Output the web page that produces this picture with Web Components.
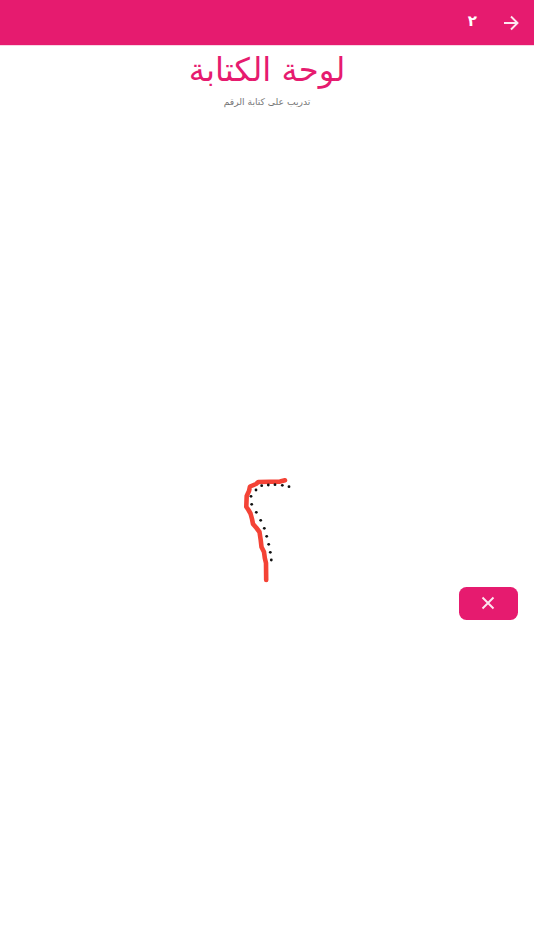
<!DOCTYPE html>
<html lang="ar">
  <head>
    <meta charset="UTF-8" />
    <title>لوحة الكتابة</title>
    <style>
      body {
        margin: 0;
        background: #fff;
        font-family: "DejaVu Sans", sans-serif;
      }
    </style>
  </head>
  <body>
    <app-bar number="٢"></app-bar>
    <page-title sub="تدريب على كتابة الرقم">لوحة الكتابة</page-title>
    <writing-board></writing-board>

    <script type="module">
      class AppBar extends HTMLElement {
        constructor() {
          super();
          this.attachShadow({ mode: "open" });
          this.shadowRoot.innerHTML = `
            <style>
              :host { display: flex; justify-content: flex-end; align-items: center; height: 45px; background: #e61b6f; border-bottom: 1px solid #f9d5e3; color: #fff; }
              span { font-size: 15px; font-weight: 700; margin-right: 22px; padding-bottom: 4px; }
              svg { width: 24px; height: 24px; margin-right: 11px; }
            </style>
            <span>${this.getAttribute("number")}</span>
            <svg viewBox="0 0 24 24" fill="none" stroke="#fde7f0" stroke-width="1.9"><path d="M5 12h13.5M12 5.5l6.5 6.5-6.5 6.5" /></svg>`;
        }
      }

      class PageTitle extends HTMLElement {
        constructor() {
          super();
          this.attachShadow({ mode: "open" });
          this.shadowRoot.innerHTML = `
            <style>
              :host { display: flex; flex-direction: column; align-items: center; height: 74px; }
              h1 { margin: 2px 0 0; font-size: 32.3px; font-weight: 400; line-height: 44px; color: #e61b6f; }
              p { margin: 1px 0 0; font-size: 9.2px; line-height: 18px; color: #757575; }
            </style>
            <h1><slot></slot></h1>
            <p>${this.getAttribute("sub")}</p>`;
        }
      }

      class WritingBoard extends HTMLElement {
        constructor() {
          super();
          this.attachShadow({ mode: "open" });
          const dots = [[289,486.7],[282.3,485.3],[275,484.7],[268.3,485],[261.7,485.7],[256,490],[251,496.3],[251.7,504.3],[256.3,512.3],[260.7,520.3],[264.3,528.3],[266.7,536.3],[268.7,544.3],[270.3,552.3],[271.3,560]];
          const line = "285,480.3 280,481.6 270,481.8 258.3,482 256,484 250,486.5 249,491 246.7,496 246.3,506.7 248.5,510 250.5,513.5 252,519 253,524 256.5,528 259.5,532 260.7,540 261.5,547 264,552 264.8,558 266,563 266.2,580";
          // board starts under the 120px header block
          const top = 120;
          this.shadowRoot.innerHTML = `
            <style>
              :host { display: block; position: relative; height: 830px; }
              svg { position: absolute; inset: 0; width: 100%; height: 100%; }
              button { position: absolute; left: 458.5px; top: ${586.5 - top}px; width: 59.5px; height: 33.5px; padding: 0; border: 0; border-radius: 7.5px; background: #e61b6f; display: flex; align-items: center; justify-content: center; }
              button svg { position: static; width: 24px; height: 24px; }
            </style>
            <svg viewBox="0 ${top} 534 830">
              <polyline points="${line}" fill="none" stroke="#f44336" stroke-width="4.6" stroke-linecap="round" stroke-linejoin="round" />
              ${dots.map(([x, y]) => `<circle cx="${x}" cy="${y}" r="1.4" fill="#111" />`).join("")}
            </svg>
            <button><svg viewBox="0 0 24 24" fill="none" stroke="#fde7f0" stroke-width="1.9"><path d="M6.5 6.5l11 11M17.5 6.5l-11 11" /></svg></button>`;
        }
      }

      customElements.define("app-bar", AppBar);
      customElements.define("page-title", PageTitle);
      customElements.define("writing-board", WritingBoard);
    </script>
  </body>
</html>
